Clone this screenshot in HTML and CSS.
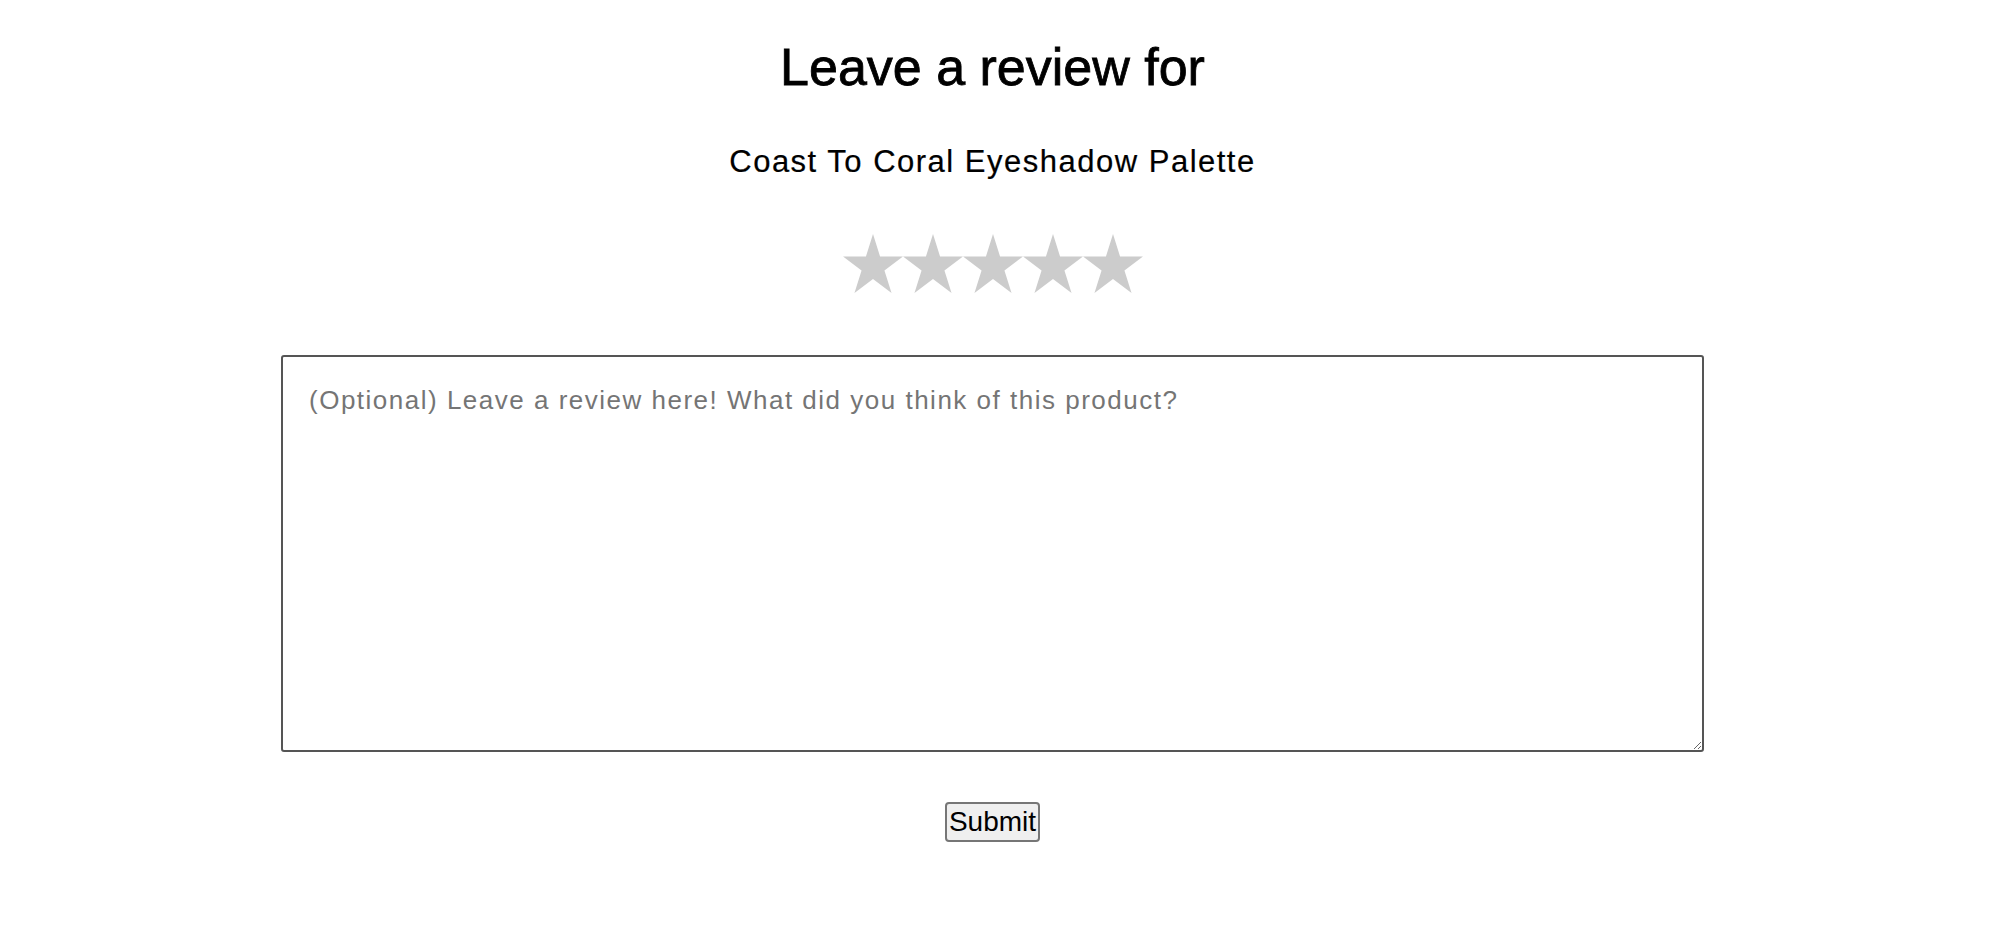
FILE: index.html
```html
<!DOCTYPE html>
<html lang="en">
<head>
<meta charset="utf-8">
<title>Leave a review</title>
<link rel="stylesheet" href="styles.css">
</head>
<body>
<main class="page">
  <h1 class="title">Leave a review for</h1>
  <h2 class="product">Coast To Coral Eyeshadow Palette</h2>
  <div class="stars">
    <svg class="star" viewBox="0 0 60 57" preserveAspectRatio="none"><polygon points="30,0 37.07,21.77 59.96,21.77 41.44,35.22 48.52,56.98 30,43.53 11.48,56.98 18.56,35.22 0.04,21.77 22.93,21.77"/></svg>
    <svg class="star" viewBox="0 0 60 57" preserveAspectRatio="none"><polygon points="30,0 37.07,21.77 59.96,21.77 41.44,35.22 48.52,56.98 30,43.53 11.48,56.98 18.56,35.22 0.04,21.77 22.93,21.77"/></svg>
    <svg class="star" viewBox="0 0 60 57" preserveAspectRatio="none"><polygon points="30,0 37.07,21.77 59.96,21.77 41.44,35.22 48.52,56.98 30,43.53 11.48,56.98 18.56,35.22 0.04,21.77 22.93,21.77"/></svg>
    <svg class="star" viewBox="0 0 60 57" preserveAspectRatio="none"><polygon points="30,0 37.07,21.77 59.96,21.77 41.44,35.22 48.52,56.98 30,43.53 11.48,56.98 18.56,35.22 0.04,21.77 22.93,21.77"/></svg>
    <svg class="star" viewBox="0 0 60 57" preserveAspectRatio="none"><polygon points="30,0 37.07,21.77 59.96,21.77 41.44,35.22 48.52,56.98 30,43.53 11.48,56.98 18.56,35.22 0.04,21.77 22.93,21.77"/></svg>
  </div>
  <textarea class="review" placeholder="(Optional) Leave a review here! What did you think of this product?"></textarea>
  <button class="submit" type="button">Submit</button>
</main>
</body>
</html>
```

FILE: styles.css
```css
html, body {
  margin: 0;
  padding: 0;
  background: #ffffff;
}

body {
  font-family: "Liberation Sans", Arial, sans-serif;
  color: #000000;
}

.page {
  margin-right: 25px;
  display: flex;
  flex-direction: column;
  align-items: center;
}

.title {
  margin: 37px 0 0;
  font-size: 52px;
  line-height: 60px;
  font-weight: normal;
  -webkit-text-stroke: 0.8px #000;
}

.product {
  margin: 47px 0 0;
  font-size: 31px;
  line-height: 36px;
  font-weight: normal;
  letter-spacing: 1.5px;
  -webkit-text-stroke: 0.2px #000;
}

.stars {
  margin-top: 54px;
  display: flex;
  height: 59px;
}

.star {
  width: 60px;
  height: 59px;
  display: block;
  fill: #cccccc;
}

.review {
  margin-top: 62px;
  box-sizing: border-box;
  width: 1423px;
  height: 397px;
  border: 2px solid #555555;
  border-radius: 3px;
  padding: 28px 26px;
  font-family: "Liberation Sans", Arial, sans-serif;
  font-size: 26px;
  line-height: 30px;
  letter-spacing: 1.5px;
  color: #000;
  background: #fff;
  outline: none;
}

.review::placeholder {
  color: #757575;
}

.submit {
  margin-top: 50px;
  box-sizing: border-box;
  height: 40px;
  padding: 0 2px;
  border: 2px solid #767676;
  border-radius: 4px;
  background: #efefef;
  font-family: "Liberation Sans", Arial, sans-serif;
  font-size: 28px;
  line-height: 32px;
  color: #000;
}
```
